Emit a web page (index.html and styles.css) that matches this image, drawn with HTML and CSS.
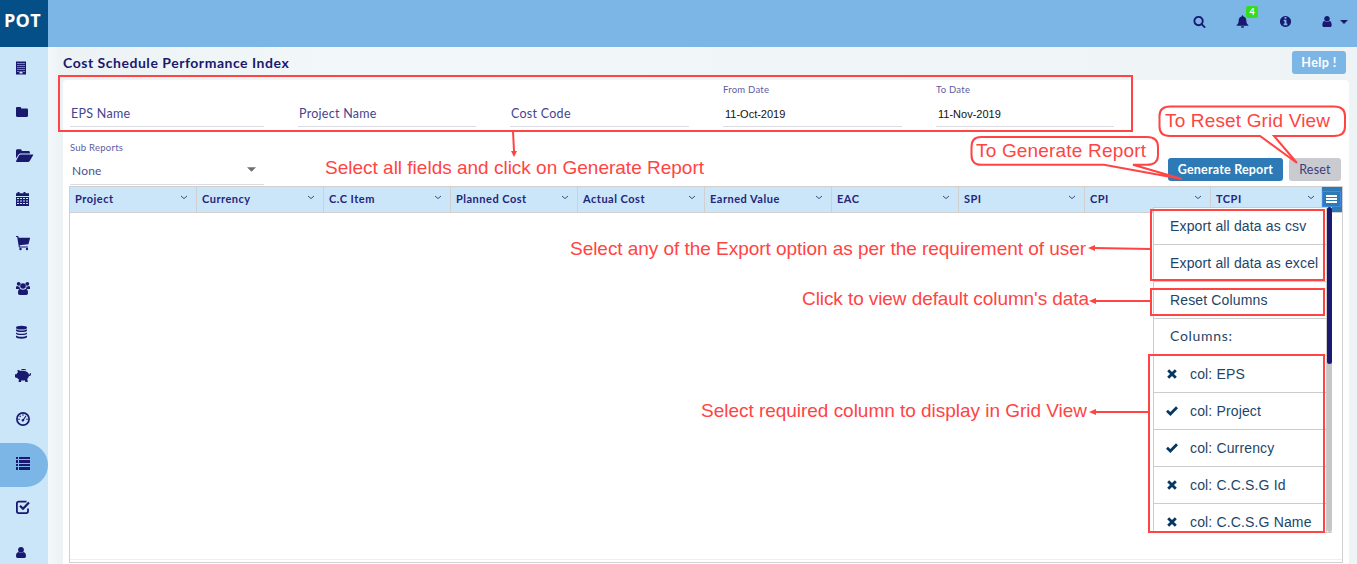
FILE: index.html
```html
<!DOCTYPE html>
<html lang="en">
<head>
<meta charset="utf-8">
<title>Cost Schedule Performance Index</title>
<link rel="stylesheet" href="styles.css">
</head>
<body>
<header class="topbar">
  <div class="logo">POT</div>
  <div class="tools">
    <svg class="tool" viewBox="0 0 1792 1792"><path d="M1216 832q0-185-131.5-316.5t-316.5-131.5-316.5 131.5-131.5 316.5 131.5 316.5 316.5 131.5 316.5-131.5 131.5-316.5zm512 832q0 52-38 90t-90 38q-54 0-90-38l-343-342q-179 124-399 124-143 0-273.5-55.5t-225-150-150-225-55.5-273.5 55.5-273.5 150-225 225-150 273.5-55.5 273.5 55.5 225 150 150 225 55.5 273.5q0 220-124 399l343 343q37 37 37 90z"/></svg>
    <span class="bell">
      <svg class="tool" viewBox="0 0 14 14"><path d="M7 .3c.5 0 .9.4.9 1v.3c2 .4 3.200 2 3.200 4 0 2.900.8 4.200 2.200 5.300v.8H.7v-.8c1.400-1.100 2.200-2.400 2.200-5.300 0-2 1.200-3.600 3.200-4v-.3c0-.6.4-1 .9-1zM5.300 12h3.400c0 1-.7 1.800-1.700 1.800S5.300 13 5.300 12z"/></svg>
      <span class="badge">4</span>
    </span>
    <svg class="tool" viewBox="0 0 1792 1792"><path d="M1152 1376v-160q0-14-9-23t-23-9h-96v-512q0-14-9-23t-23-9h-320q-14 0-23 9t-9 23v160q0 14 9 23t23 9h96v320h-96q-14 0-23 9t-9 23v160q0 14 9 23t23 9h448q14 0 23-9t9-23zm-128-896v-160q0-14-9-23t-23-9h-192q-14 0-23 9t-9 23v160q0 14 9 23t23 9h192q14 0 23-9t9-23zm640 416q0 209-103 385.500t-279.500 279.500-385.500 103-385.500-103-279.500-279.500-103-385.500 103-385.500 279.500-279.500 385.500-103 385.500 103 279.500 279.500 103 385.500z"/></svg>
    <span class="account">
      <svg class="tool" viewBox="0 0 1792 1792"><path d="M1536 1399q0 109-62.500 187t-150.500 78h-854q-88 0-150.500-78t-62.500-187q0-85 8.500-160.500t31.500-152 58.500-131 94-89 134.500-34.500q131 128 313 128t313-128q76 0 134.500 34.500t94 89 58.500 131 31.500 152 8.500 160.500zm-256-887q0 159-112.500 271.500t-271.500 112.500-271.500-112.500-112.500-271.500 112.500-271.500 271.500-112.500 271.500 112.500 112.500 271.500z"/></svg>
      <svg class="caret" viewBox="0 0 8 4"><path d="M0 0h8L4 4z"/></svg>
    </span>
  </div>
</header>
<div class="shell">
  <nav class="sidebar">
    <a class="nav"><svg viewBox="0 0 20 20"><path fill-rule="evenodd" d="M2 2.500h10v13H2zM3.500 4v1h1V4zm2 0v1h1V4zm2 0v1h1V4zm2 0v1h1V4zM3.500 6v1h1V6zm2 0v1h1V6zm2 0v1h1V6zm2 0v1h1V6zM3.500 8v1h1V8zm2 0v1h1V8zm2 0v1h1V8zm2 0v1h1V8zM3.500 10v1h1v-1zm2 0v1h1v-1zm2 0v1h1v-1zm2 0v1h1v-1zM3.500 12v1h1v-1zm6 0v1h1v-1zM5.500 12.500v2h3v-2z"/></svg></a>
    <a class="nav"><svg viewBox="0 0 20 20"><path d="M2 5.200C2 4.500 2.500 4 3.200 4H6c.7 0 1.200.5 1.200 1.200v.3h5.600c.7 0 1.200.5 1.200 1.200v6.100c0 .7-.5 1.200-1.200 1.200H3.200c-.7 0-1.200-.5-1.200-1.200z"/></svg></a>
    <a class="nav"><svg viewBox="0 0 20 20"><path d="M2 3.700C2 3 2.600 2.300 3.400 2.300h3c.8 0 1.300.6 1.300 1.300V4h6.800c.8 0 1.400.6 1.400 1.400v1H6.700c-.9 0-1.800.5-2.300 1.300L2 11.500zM6.500 7.400h12.200c.5 0 .7.400.4.800l-3.400 5.700c-.4.600-1 1-1.700 1H2.600c-.5 0-.8-.3-.5-.8l3-5.800c.3-.5.8-.9 1.400-.9z"/></svg></a>
    <a class="nav"><svg viewBox="0 0 20 20"><path fill-rule="evenodd" d="M2 2.300h1.500V1h2v1.300h4V1h2v1.300H15V5H2zM2 6h13v9H2zM3 7v1h2V7zm3 0v1h2V7zm3 0v1h2V7zm3 0v1h2V7zM3 9.500v1h2v-1zm3 0v1h2v-1zm3 0v1h2v-1zm3 0v1h2v-1zM3 12v1h2v-1zm3 0v1h2v-1zm3 0v1h2v-1zm3 0v1h2v-1z"/></svg></a>
    <a class="nav"><svg viewBox="0 0 20 20"><path d="M2 1h2.200l.5 1.700H16v.8l-1.600 5.800-8.800.9.300 1.300h8v1H4.900L3.200 2H2z"/><circle cx="6.500" cy="14" r="1.200"/><circle cx="13" cy="14" r="1.200"/></svg></a>
    <a class="nav"><svg viewBox="0 0 20 20"><circle cx="4.700" cy="4.800" r="1.900"/><circle cx="13.300" cy="4.800" r="1.900"/><circle cx="9" cy="7" r="2.800"/><path d="M2 10V8.600c0-1 .4-1.700 1.200-1.700.7.500 1.500.7 2.300.5-.1 1 .2 1.700.7 2.600zM16 10V8.600c0-1-.4-1.700-1.200-1.700-.7.500-1.500.7-2.300.5.1 1-.2 1.700-.7 2.600zM6 9.800c1.700 1.300 4.300 1.300 6 0 1.400.2 2 1.700 2 4.200 0 1.200-.7 2-1.800 2H5.800C4.700 16 4 15.200 4 14c0-2.500.6-4 2-4.200z"/></svg></a>
    <a class="nav"><svg viewBox="0 0 20 20"><ellipse cx="7.500" cy="4.700" rx="5.500" ry="1.900"/><path d="M2 6.300c2 1.700 9 1.700 11 0v1.200c0 2-11 2-11 0zM2 9.400c2 1.700 9 1.700 11 0v1.200c0 2-11 2-11 0zM2 12.500c2 1.700 9 1.700 11 0v1.500c0 2.300-11 2.300-11 0z"/></svg></a>
    <a class="nav"><svg viewBox="0 0 20 20"><path d="M1 7.300h1.500c.3-1 .8-1.600 1.500-2.100L3.300 3c1.300-.1 2.400.3 3.200 1.100 2-.5 4.500-.5 6.200.6 1.200.7 2 1.700 2.300 2.800.9.300 1-.5.700-1.300.7-.4 1.500.2 1.300 1.300-.2 1-1 1.500-2 1.500-.2 1-.8 2-1.700 2.700l.5 3.200h-2.500l-.3-1.700c-1.200.3-2.500.3-3.600 0L7 14.900H4.500L5 12.400c-.8-.4-1.400-.9-1.900-1.500L1 10.300z"/><path d="M6.800 3.300c.3-1.700 5-2 5.600.1-1.800-.5-3.700-.5-5.600-.1z"/></svg></a>
    <a class="nav"><svg viewBox="0 0 20 20"><circle cx="9" cy="8" r="6.100" fill="none" stroke="#191970" stroke-width="1.700"/><circle cx="5" cy="8.300" r=".8"/><circle cx="6.200" cy="5.300" r=".8"/><circle cx="9" cy="4" r=".8"/><circle cx="13" cy="8.300" r=".8"/><path d="M11.700 4.500l.8.500-2.300 3.600c.3 1.200-.3 2-1.200 2-1 0-1.700-1-1.300-1.900.3-.6.900-.9 1.500-.8z"/></svg></a>
    <a class="nav active"><svg viewBox="0 0 20 20"><path d="M2 2h2v2H2zM2 5h2v3H2zM2 9h2v2H2zM2 12h2v3H2zM5 2h11v2H5zM5 5h11v3H5zM5 9h11v2H5zM5 12h11v3H5z"/></svg></a>
    <a class="nav"><svg viewBox="0 0 20 20"><path fill="none" stroke="#191970" stroke-width="1.800" d="M12.500 2.600H4.700c-1 0-1.800.7-1.800 1.700v8c0 1 .8 1.800 1.800 1.800h7.500c1 0 1.800-.8 1.800-1.800V9.500"/><path fill="none" stroke="#191970" stroke-width="2.200" d="M6 6.800l3 3L15 3.600"/></svg></a>
    <a class="nav"><svg viewBox="0 0 20 20"><circle cx="7" cy="6.800" r="2.900"/><path d="M4.700 8.900c1.500 1.300 3.100 1.300 4.600 0 1.900.2 2.700 1.800 2.700 4.200 0 1.200-.6 2-1.600 2H3.600c-1 0-1.600-.8-1.600-2 0-2.400.8-4 2.700-4.200z"/></svg></a>
  </nav>
  <main class="content">
    <div class="heading"><h1>Cost Schedule Performance Index</h1><button class="btn help">Help !</button></div>
    <section class="card">
      <div class="filters">
        <div class="field"><span class="placeholder">EPS Name</span></div>
        <div class="field"><span class="placeholder">Project Name</span></div>
        <div class="field"><span class="placeholder">Cost Code</span></div>
        <div class="field"><label>From Date</label><span class="date">11-Oct-2019</span></div>
        <div class="field"><label>To Date</label><span class="date">11-Nov-2019</span></div>
      </div>
      <div class="actions">
        <div class="select"><label>Sub Reports</label><div class="value"><span>None</span><svg viewBox="0 0 10 5"><path d="M0 0h10L5 5z"/></svg></div></div>
        <div class="buttons"><button class="btn primary">Generate Report</button><button class="btn reset">Reset</button></div>
      </div>
      <div class="grid">
        <div class="grid-head">
          <div class="col">Project<svg viewBox="0 0 8 5"><path d="M1 1l3 2.600L7 1"/></svg></div>
          <div class="col">Currency<svg viewBox="0 0 8 5"><path d="M1 1l3 2.600L7 1"/></svg></div>
          <div class="col">C.C Item<svg viewBox="0 0 8 5"><path d="M1 1l3 2.600L7 1"/></svg></div>
          <div class="col">Planned Cost<svg viewBox="0 0 8 5"><path d="M1 1l3 2.600L7 1"/></svg></div>
          <div class="col">Actual Cost<svg viewBox="0 0 8 5"><path d="M1 1l3 2.600L7 1"/></svg></div>
          <div class="col">Earned Value<svg viewBox="0 0 8 5"><path d="M1 1l3 2.600L7 1"/></svg></div>
          <div class="col">EAC<svg viewBox="0 0 8 5"><path d="M1 1l3 2.600L7 1"/></svg></div>
          <div class="col">SPI<svg viewBox="0 0 8 5"><path d="M1 1l3 2.600L7 1"/></svg></div>
          <div class="col">CPI<svg viewBox="0 0 8 5"><path d="M1 1l3 2.600L7 1"/></svg></div>
          <div class="col last">TCPI<svg viewBox="0 0 8 5"><path d="M1 1l3 2.600L7 1"/></svg></div>
          <div class="menu-btn"><span><svg viewBox="0 0 11 8"><path d="M0 0h11v2H0zM0 3h11v2H0zM0 6h11v2H0z"/></svg></span></div>
        </div>
        <div class="menu">
          <ul>
            <li>Export all data as csv</li>
            <li>Export all data as excel</li>
            <li>Reset Columns</li>
            <li class="caption">Columns:</li>
            <li><svg viewBox="0 0 12 10"><path d="M2.200 1.200l7.600 7.600M9.800 1.200L2.200 8.800"/></svg>col: EPS</li>
            <li><svg viewBox="0 0 12 10"><path d="M1 4.800l3.400 3.200L11 1.200"/></svg>col: Project</li>
            <li><svg viewBox="0 0 12 10"><path d="M1 4.800l3.400 3.200L11 1.200"/></svg>col: Currency</li>
            <li><svg viewBox="0 0 12 10"><path d="M2.200 1.200l7.600 7.600M9.800 1.200L2.200 8.800"/></svg>col: C.C.S.G Id</li>
            <li><svg viewBox="0 0 12 10"><path d="M2.200 1.200l7.600 7.600M9.800 1.200L2.200 8.800"/></svg>col: C.C.S.G Name</li>
          </ul>
          <div class="scroll"><div class="thumb"></div></div>
        </div>
        <div class="grid-foot"></div>
      </div>
    </section>
  </main>
</div>
<svg class="notes" viewBox="0 0 1357 564" width="1357" height="564">
  <g class="lines">
    <rect x="59" y="76" width="1073" height="55"/>
    <rect x="1151" y="210" width="173" height="70"/>
    <rect x="1151" y="289" width="173" height="26"/>
    <rect x="1149" y="355" width="175" height="177"/>
    <path d="M513 131l1 20M1151 249l-57-1M1151 301h-56M1149 412h-54"/>
    <path d="M1170 106.500H1334Q1345 106.500 1345 116V126.500Q1345 136 1334 136H1274L1297 163L1260 136H1170Q1159.500 136 1159.500 126.500V116Q1159.500 106.500 1170 106.500z"/>
    <path d="M981 137H1147Q1158 137 1158 147V155Q1158 164.800 1147 164.800H1133L1182 179L1104 164.800H981Q971.500 164.800 971.500 155V147Q971.500 137 981 137z"/>
  </g>
  <path class="tips" d="M511 151h6l-3 6zM1095 245v6l-7-3zM1096 298v6l-7-3zM1096 409v6l-7-3z"/>
  <g class="words">
    <text x="325" y="174" textLength="379">Select all fields and click on Generate Report</text>
    <text x="976" y="157" textLength="170">To Generate Report</text>
    <text x="1165" y="127" textLength="165">To Reset Grid View</text>
    <text x="570" y="255" textLength="516">Select any of the Export option as per the requirement of user</text>
    <text x="802" y="305" textLength="287">Click to view default column's data</text>
    <text x="701" y="417" textLength="386">Select required column to display in Grid View</text>
  </g>
</svg>
</body>
</html>
```

FILE: styles.css
```css
* { box-sizing: border-box; }
body { margin: 0; height: 564px; overflow: hidden; font-family: Lato, sans-serif; color: #191970; background: #eef3f6; position: relative; }
svg { display: block; fill: currentColor; }
.topbar { height: 47px; background: #7cb6e7; display: flex; justify-content: space-between; }
.logo { width: 48px; height: 47px; background: #044f87; color: #fff; font: bold 18px "Open Sans", sans-serif; line-height: 41px; padding-left: 4px; letter-spacing: .3px; }
.tools { display: flex; align-items: flex-start; padding: 15px 9px 0 0; }
.tool { width: 13px; height: 13px; margin-right: 30px; }
.bell { position: relative; }
.badge { position: absolute; left: 10px; top: -9px; width: 12px; height: 12px; border-radius: 2px; background: #35de1b; color: #fff; font-size: 9px; font-weight: bold; line-height: 11px; text-align: center; }
.account { display: flex; align-items: center; }
.account .tool { width: 14px; margin-right: 6px; margin-left: -2px; }
.caret { width: 8px; height: 4px; }
.shell { display: flex; height: 517px; }
.sidebar { width: 48px; background: #cbe6f9; overflow: hidden; flex: none; }
.nav { display: flex; height: 44px; align-items: center; padding-left: 14px; }
.nav svg { width: 20px; height: 20px; }
.nav.active { background: #7cb6e7; border-radius: 0 22px 22px 0; }
.content { flex: 1; padding: 0 8px 0 15px; background: linear-gradient(90deg, #f3f8f9, #edf3f4 12px, #f2f7f9 300px, #eef3f6); }
.heading { height: 33px; display: flex; justify-content: space-between; padding: 4px 3px 0 0; }
h1 { margin: 0; font-size: 14px; line-height: 24px; font-weight: bold; letter-spacing: .53px; }
.btn { border: 0; border-radius: 3px; height: 23px; padding: 0; font: bold 12.500px Lato, sans-serif; letter-spacing: .2px; color: #fff; }
.help { width: 54px; background: #7cb6e7; letter-spacing: .4px; }
.card { background: #fff; height: 484px; border-radius: 4px 4px 0 0; padding: 0 6px; }
.filters { display: grid; grid-template-columns: 194px 178px 179px 179px 178px; column-gap: 34px; padding-left: 1px; height: 47px; }
.field { border-bottom: 1px solid #dcdce4; padding-left: 1px; display: flex; flex-direction: column; justify-content: flex-end; height: 47px; }
.placeholder { font-size: 12.500px; line-height: 16px; margin-bottom: 4px; letter-spacing: .27px; color: #45458f; }
label { font-size: 9.500px; line-height: 12px; letter-spacing: .25px; color: #5c5ca0; margin-left: -1px; }
.date { font: 11px "Liberation Sans", Arial, sans-serif; line-height: 14px; margin: 11px 0 5px 1px; color: #111; }
.actions { height: 59px; display: flex; justify-content: space-between; align-items: flex-start; }
.select { width: 195px; padding: 15px 0 0 1px; }
.select label { display: block; margin: 0; }
.value { display: flex; justify-content: space-between; align-items: center; height: 31px; border-bottom: 1px solid #dcdce4; padding: 0 8px 0 2px; font-size: 12px; letter-spacing: .2px; color: #50508f; }
.value span { padding-top: 9px; height: 30px; line-height: 16px; }
.value svg { width: 9px; height: 5px; color: #707070; }
.buttons { display: flex; gap: 6px; padding: 31px 2px 0 0; }
.primary { width: 115px; background: #2d7ab6; }
.reset { width: 52px; background: #c9cbd1; color: #3c3c78; font-weight: normal; }
.grid { height: 377px; border: 1px solid #d0d0d0; position: relative; display: flex; flex-direction: column; }
.grid-head { display: grid; grid-template-columns: repeat(7, 127px) 126px 126px 111px 1fr; height: 26px; border-bottom: 1px solid #d0d0d0; background: #cbe6f9; }
.col { display: flex; justify-content: space-between; align-items: flex-start; border-right: 1px solid #d0d0d0; padding: 4px 8px 0 5px; font-size: 11px; line-height: 15px; font-weight: bold; letter-spacing: .5px; color: #25257a; }
.col.last { padding-right: 6px; }
.col svg { width: 8px; height: 5px; margin-top: 4px; fill: none; stroke: #46468b; }
.menu-btn { background: #2d7ab6; height: 25px; padding: 4px 1px 5px 0; }
.menu-btn span { display: block; height: 16px; border: 1px solid #3f8be0; padding: 3px 0 0 3px; }
.menu-btn svg { width: 11px; height: 8px; color: #fff; }
.menu { position: absolute; left: 1083px; top: 20px; width: 179px; height: 326px; display: flex; overflow: hidden; border-bottom: 1px solid #ccc; background: #fff; }
.menu ul { margin: 0; padding: 0; width: 174px; list-style: none; border: solid #ccc; border-width: 1px 1px 0; flex: none; }
.menu li { height: 37px; border-bottom: 1px solid #ccc; padding-left: 16px; font: 14px "Liberation Sans", Arial, sans-serif; line-height: 37px; color: #1d4568; display: flex; align-items: center; white-space: nowrap; letter-spacing: .15px; }
.menu .caption { font: 14px Lato, sans-serif; line-height: 34px; letter-spacing: .7px; align-items: flex-start; }
.menu li svg { width: 12px; height: 10px; margin: 0 12px 0 -4px; fill: none; stroke: #043761; stroke-width: 2.800; }
.scroll { width: 5px; background: #c6c6c6; border-radius: 3px; flex: none; }
.thumb { height: 157px; background: #191970; border-radius: 3px; }
.grid-foot { margin-top: auto; height: 3px; border-top: 1px solid #eee; }
.notes { position: absolute; inset: 0; pointer-events: none; }
.lines { fill: none; stroke: #ff4444; stroke-width: 2; }
.tips { fill: #ff4444; }
.words { fill: #ff4444; font: 19px "Liberation Sans", Arial, sans-serif; }
```
